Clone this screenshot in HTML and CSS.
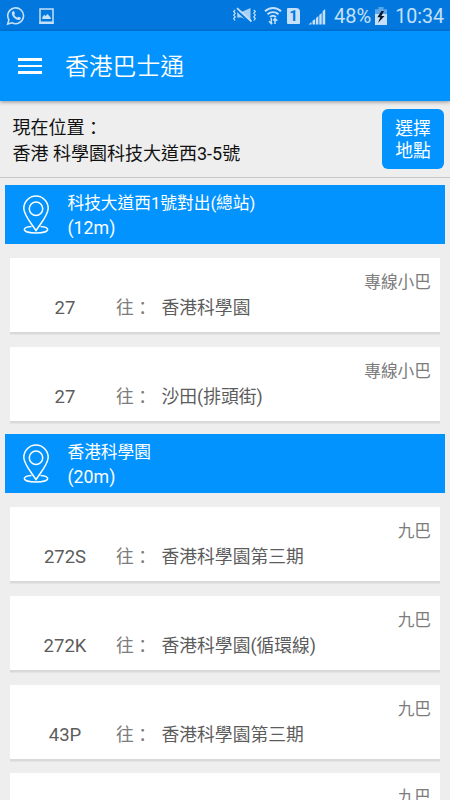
FILE: index.html
```html
<!DOCTYPE html>
<html lang="zh-Hant-HK">
<head>
    <meta charset="UTF-8">
    <meta name="viewport" content="width=device-width, initial-scale=1.0">
    <title>香港巴士通</title>
    <link rel="stylesheet" href="styles.css">
</head>
<body>
    <div class="status-bar">
        <svg class="icon-whatsapp" width="20" height="20" viewBox="0 0 20 20" fill="none">
            <path d="M1.700 18l1.200-4.100a7.900 7.900 0 1 1 3.100 2.900z" stroke="currentColor" stroke-width="1.600"/>
            <path d="M6.600 5.400c.6-.6 1.300-.5 1.600.2l.7 1.600c.2.500-.8 1.200-.6 1.600.7 1.300 1.600 2.200 2.900 2.800.5.200 1.100-1 1.600-.8l1.700.8c.6.300.3 1.600-.5 2.100-1.200.8-2.900.3-4.700-.9-1.800-1.300-3.300-3.300-3.500-5-.1-.9.2-1.800.8-2.400z" fill="currentColor"/>
        </svg>
        <svg class="icon-image" width="15" height="16" viewBox="0 0 15 16">
            <path d="M1 .9h13v14H1z" fill="none" stroke="currentColor" stroke-width="1.500"/>
            <path d="M.3 13.600h14.400V16H.3zM3.300 11V9l2-2.200L6.600 8 8.500 6l3.200 3.400V11z" fill="currentColor"/>
        </svg>
        <div class="status-right">
            <svg class="icon-mute" width="25" height="16" viewBox="0 0 25 16">
                <path d="M5.200 5h4.300L18.500 1v13.500l-9-4H5.200z" fill="currentColor" opacity=".85"/>
                <path d="M4.500 2.500l14 13" stroke="#0278df" stroke-width="3"/>
                <path d="M5 1.200l14.500 13.300" stroke="currentColor" stroke-width="1.800"/>
                <path d="M3.200 3L1.700 4.500l1.500 1.800-1.500 1.800 1.500 1.800-1.500 1.700L3 13.500M21.800 3l1.500 1.500-1.500 1.800 1.500 1.800-1.500 1.800 1.500 1.700-1.500 1.900" fill="none" stroke="currentColor" stroke-width="1.200"/>
            </svg>
            <svg class="icon-wifi" width="18" height="20" viewBox="0 0 18 20">
                <path d="M1 5.300a11.500 11.500 0 0 1 16 0M3.500 8.300a8 8 0 0 1 11 0M6 11a4.500 4.500 0 0 1 6 0" fill="none" stroke="currentColor" stroke-width="1.900"/>
                <path d="M7.300 12v5.500M5 15.300l2.300 2.400 1-1M11 18v-5M9.200 14.500l1.800-2 2.300 2.300" fill="none" stroke="currentColor" stroke-width="1.500"/>
            </svg>
            <span class="sim">1</span>
            <svg class="icon-signal" width="18" height="17" viewBox="0 0 18 17" fill="currentColor">
                <path d="M.5 16.500l3-2.500v2.500zM4.500 12.800l2.700-1.800v5.500H4.500zM8 10l2.400-1.900v8.400H8zM11.300 7l2.400-2v11.500h-2.400zM14.600 3.300L17.200 1v15.500h-2.600z"/>
            </svg>
            <span class="battery-text">48%</span>
            <svg class="icon-battery" width="12" height="18" viewBox="0 0 12 18">
                <path d="M3.500 0h5v2.300H12v6H0v-6h3.500z" fill="#5aa6e8"/>
                <path d="M0 7h12v11H0z" fill="currentColor"/>
                <path d="M6.500 4L2.300 10.300h3L3 16l6.500-7H6.300L9 4z" fill="#06172b"/>
            </svg>
            <span class="clock">10:34</span>
        </div>
    </div>

    <div class="app-bar">
        <div class="menu"><span></span><span></span><span></span></div>
        <h1>香港巴士通</h1>
    </div>

    <div class="location">
        <p>現在位置<span class="colon">：</span><br>香港 科學園科技大道西3-5號</p>
        <button>選擇<br>地點</button>
    </div>

    <div class="stop-list">
        <div class="stop">
            <svg class="pin" width="28" height="40" viewBox="0 0 28 40" fill="none" stroke="currentColor" stroke-width="1.500">
                <path d="M14 35.700C9.500 28.500 1.800 20.300 1.800 13.300a12.200 12.200 0 0 1 24.400 0c0 7-7.700 15.200-12.200 22.400z"/>
                <circle cx="14" cy="13.700" r="6.700"/>
                <path d="M9.500 31.500c-4.200.4-7.200 1.500-7.200 3 0 2 5.200 3.500 11.700 3.500s11.700-1.500 11.700-3.500c0-1.500-3-2.600-7.200-3"/>
            </svg>
            <div class="stop-name">科技大道西1號對出(總站)<br><span>(12m)</span></div>
        </div>
        <div class="route">
            <div class="operator">專線小巴</div>
            <div class="route-info"><span class="number">27</span><span class="to">往<span class="colon">：</span></span><span class="dest">香港科學園</span></div>
        </div>
        <div class="route">
            <div class="operator">專線小巴</div>
            <div class="route-info"><span class="number">27</span><span class="to">往<span class="colon">：</span></span><span class="dest">沙田(排頭街)</span></div>
        </div>

        <div class="stop">
            <svg class="pin" width="28" height="40" viewBox="0 0 28 40" fill="none" stroke="currentColor" stroke-width="1.500">
                <path d="M14 35.700C9.500 28.500 1.800 20.300 1.800 13.300a12.200 12.200 0 0 1 24.400 0c0 7-7.700 15.200-12.200 22.400z"/>
                <circle cx="14" cy="13.700" r="6.700"/>
                <path d="M9.500 31.500c-4.200.4-7.200 1.500-7.200 3 0 2 5.200 3.500 11.700 3.500s11.700-1.500 11.700-3.500c0-1.500-3-2.600-7.200-3"/>
            </svg>
            <div class="stop-name">香港科學園<br><span>(20m)</span></div>
        </div>
        <div class="route">
            <div class="operator">九巴</div>
            <div class="route-info"><span class="number">272S</span><span class="to">往<span class="colon">：</span></span><span class="dest">香港科學園第三期</span></div>
        </div>
        <div class="route">
            <div class="operator">九巴</div>
            <div class="route-info"><span class="number">272K</span><span class="to">往<span class="colon">：</span></span><span class="dest">香港科學園(循環線)</span></div>
        </div>
        <div class="route">
            <div class="operator">九巴</div>
            <div class="route-info"><span class="number">43P</span><span class="to">往<span class="colon">：</span></span><span class="dest">香港科學園第三期</span></div>
        </div>
        <div class="route">
            <div class="operator">九巴</div>
        </div>
    </div>
</body>
</html>
```
FILE: styles.css
```css
* {
    box-sizing: border-box;
}
body {
    display: flex;
    flex-direction: column;
    height: 800px;
    margin: 0;
    overflow: hidden;
    background-color: #eee;
    font-family: Roboto, "Noto Sans CJK TC", sans-serif;
}
svg {
    display: block;
    flex: none;
}
.status-bar {
    display: flex;
    flex: none;
    align-items: center;
    height: 31px;
    padding: 1px 6px 0 6px;
    background-color: #0278df;
    color: #c5e0f8;
}
.icon-image {
    margin-left: 13px;
}
.status-right {
    display: flex;
    align-items: center;
    margin-left: auto;
    font-size: 20px;
    line-height: 31px;
}
.icon-mute {
    margin-top: -2px;
}
.icon-wifi {
    margin-left: 7px;
}
.sim {
    width: 13px;
    height: 16px;
    margin-left: 5px;
    border-radius: 1px 4px 1px 1px;
    background-color: #c5e0f8;
    color: #0278df;
    font-size: 15px;
    font-weight: 700;
    line-height: 17px;
    text-align: center;
}
.icon-signal {
    margin-left: 8px;
}
.battery-text {
    margin-left: 8px;
}
.icon-battery {
    margin-left: 4px;
}
.clock {
    margin-left: 8px;
    font-size: 19.600px;
}
.app-bar {
    z-index: 1;
    display: flex;
    flex: none;
    align-items: center;
    height: 70px;
    padding-left: 18px;
    background-color: #0293ff;
    box-shadow: 0 1px 4px rgba(0,0,0,0.4);
    color: #fff;
}
.menu {
    display: flex;
    flex-direction: column;
    gap: 4px;
    width: 24px;
}
.menu span {
    height: 2.700px;
    background-color: #fff;
}
.app-bar h1 {
    margin: 1px 0 0 23px;
    font-size: 23.800px;
    font-weight: 350;
    line-height: 30px;
}
.location {
    display: flex;
    flex: none;
    justify-content: space-between;
    height: 77px;
    padding: 8px 6px 0 12.500px;
    border-bottom: 1px solid #c8c8c8;
    color: #111;
    font-size: 18px;
}
.location p {
    margin: 6px 0 0;
    line-height: 25.500px;
}
.location button {
    width: 62px;
    height: 60px;
    padding: 1px 0 0;
    border: none;
    border-radius: 6px;
    background-color: #0293ff;
    color: #fff;
    font-family: inherit;
    font-size: 17.800px;
    line-height: 22px;
}
.colon {
    line-height: 1;
    vertical-align: -1px;
}
.stop-list {
    padding: 7px 5px 0;
}
.stop {
    display: flex;
    align-items: center;
    height: 58.500px;
    padding-left: 17px;
    background-color: #0293ff;
    color: #fff;
}
.pin {
    margin-top: 1px;
}
.stop-name {
    margin-top: 5px;
    margin-left: 17.500px;
    font-size: 16.700px;
    line-height: 24px;
}
.stop-name span {
    font-size: 17.800px;
}
.route {
    height: 74.300px;
    margin: 14.500px 5px 0;
    padding: 13px 9px 0 0;
    background-color: #fff;
    box-shadow: 0 2.500px 0 #d9d9d9;
    color: #5c5c5c;
}
.route + .stop {
    margin-top: 13px;
}
.operator {
    color: #7c7c7c;
    font-size: 16.700px;
    line-height: 24px;
    text-align: right;
}
.route-info {
    display: flex;
    font-size: 17.800px;
    line-height: 26px;
}
.number {
    width: 110px;
    font-size: 18.500px;
    text-align: center;
}
.to {
    width: 45.500px;
    margin-left: -4px;
    color: #7c7c7c;
}
```
